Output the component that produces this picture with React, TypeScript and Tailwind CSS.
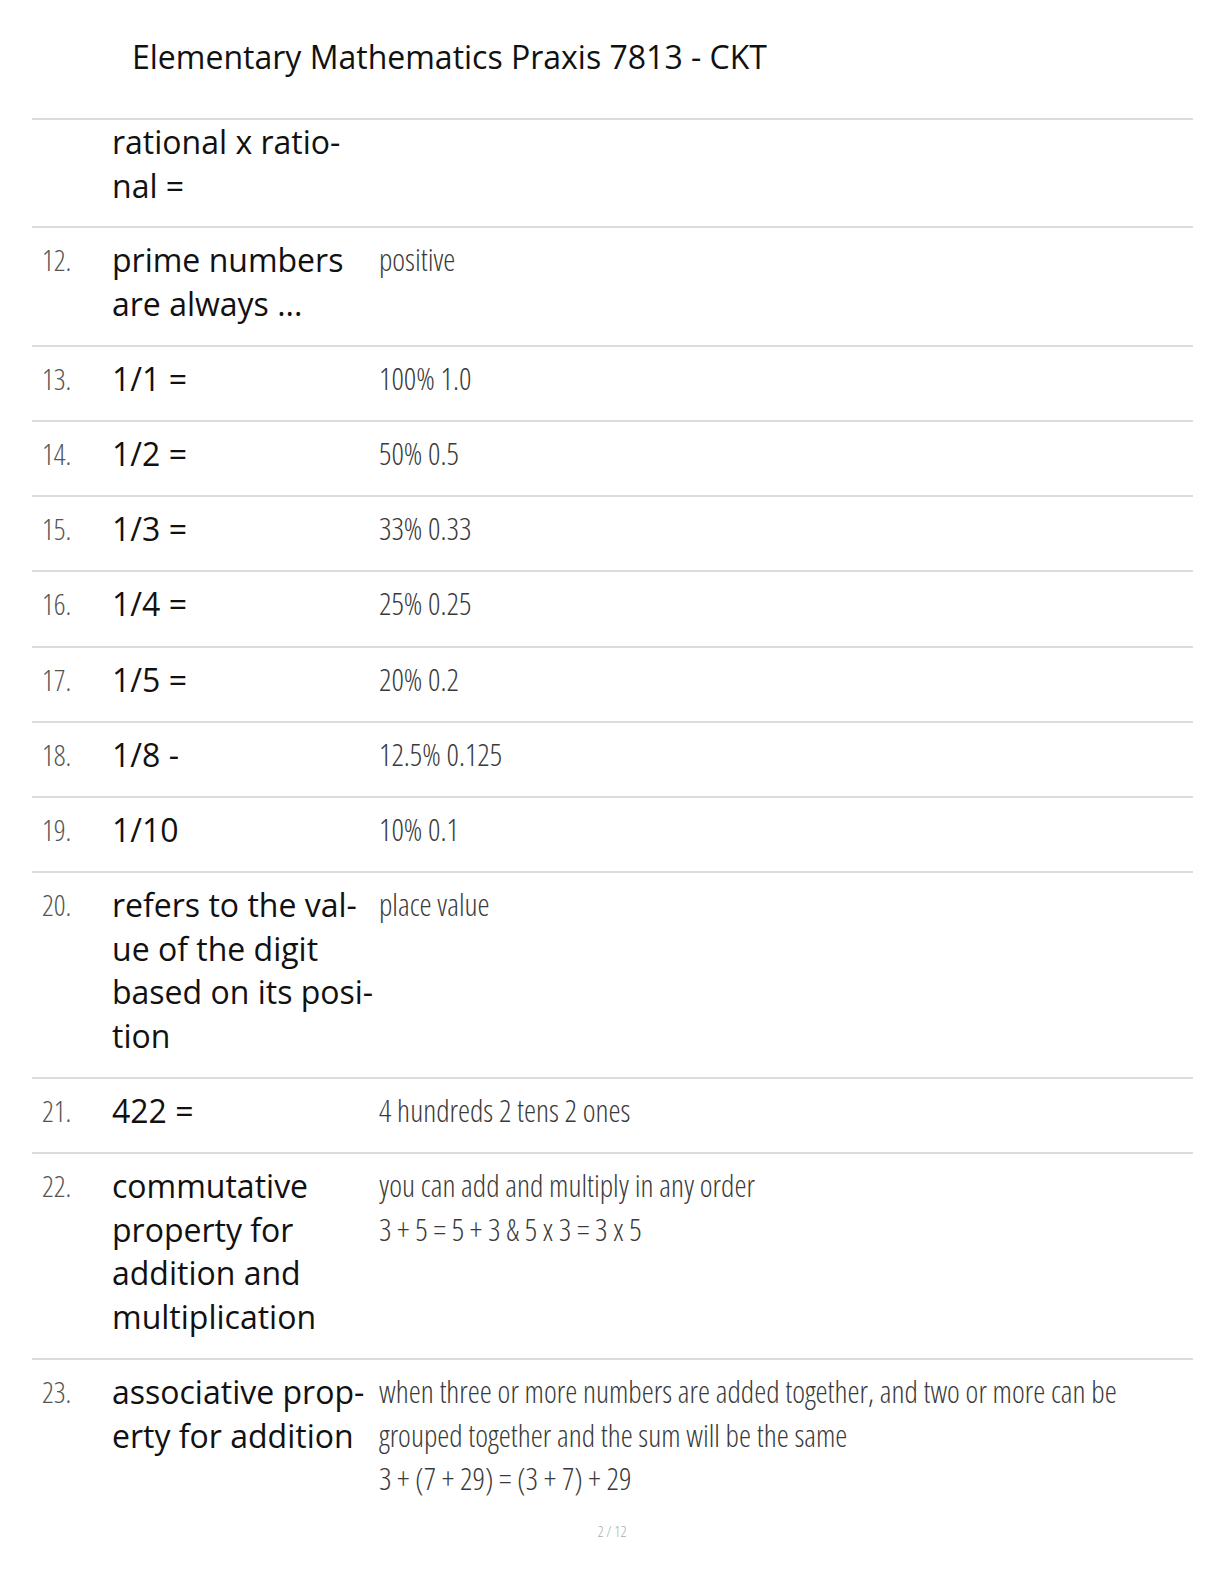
import React from 'react'

type Row = {
    num?: string
    term: React.ReactNode
    def?: React.ReactNode
    first?: boolean
    last?: boolean
}

const rows: Row[] = [
    { term: <>rational x ratio-<br />nal =</>, first: true },
    { num: '12.', term: <>prime numbers<br />are always ...</>, def: 'positive' },
    { num: '13.', term: '1/1 =', def: '100% 1.0' },
    { num: '14.', term: '1/2 =', def: '50% 0.5' },
    { num: '15.', term: '1/3 =', def: '33% 0.33' },
    { num: '16.', term: '1/4 =', def: '25% 0.25' },
    { num: '17.', term: '1/5 =', def: '20% 0.2' },
    { num: '18.', term: '1/8 -', def: '12.5% 0.125' },
    { num: '19.', term: '1/10', def: '10% 0.1' },
    { num: '20.', term: <>refers to the val-<br />ue of the digit<br />based on its posi-<br />tion</>, def: 'place value' },
    { num: '21.', term: '422 =', def: '4 hundreds 2 tens 2 ones' },
    {
        num: '22.',
        term: <>commutative<br />property for<br />addition and<br />multiplication</>,
        def: <>you can add and multiply in any order<br />3 + 5 = 5 + 3 &amp; 5 x 3 = 3 x 5</>,
    },
    {
        num: '23.',
        term: <>associative prop-<br />erty for addition</>,
        def: <>when three or more numbers are added together, and two or more can be<br />grouped together and the sum will be the same<br />3 + (7 + 29) = (3 + 7) + 29</>,
        last: true,
    },
]

function CardRow({ num, term, def, first, last }: Row) {
    return (
        <div className={`grid grid-cols-[70px_267px_1fr] border-t-2 border-[#dcdce0] pl-[10px] leading-[43.6px] ${first ? 'pt-0 pb-[18.8px]' : last ? 'pt-[10px] pb-[19px]' : 'pt-[10px] pb-[19.6px]'}`}>
            <div className="font-['Open_Sans'] font-light font-stretch-condensed text-[29px] text-[#555]">{num}</div>
            <div className="font-['Open_Sans'] text-[32px] text-[#111] whitespace-nowrap">{term}</div>
            <div className="font-['Open_Sans'] font-light font-stretch-condensed text-[30.5px] text-[#3a3a3a] whitespace-nowrap">{def}</div>
        </div>
    )
}

export default function App() {
    return (
        <div className="w-[1224px] h-[1584px] bg-white px-[32px]">
            <div className="flex items-center h-[118px] pl-[100px] pb-[4px]">
                <h1 className="font-['Open_Sans'] text-[32px] text-[#111]">Elementary Mathematics Praxis 7813 - CKT</h1>
            </div>
            <div className="w-[1161px]">
                {rows.map((r, i) => (
                    <CardRow key={i} {...r} />
                ))}
            </div>
            <div className="flex justify-center font-['Open_Sans'] font-light font-stretch-condensed text-[15px] text-[#aaa]">
                2 / 12
            </div>
        </div>
    )
}
